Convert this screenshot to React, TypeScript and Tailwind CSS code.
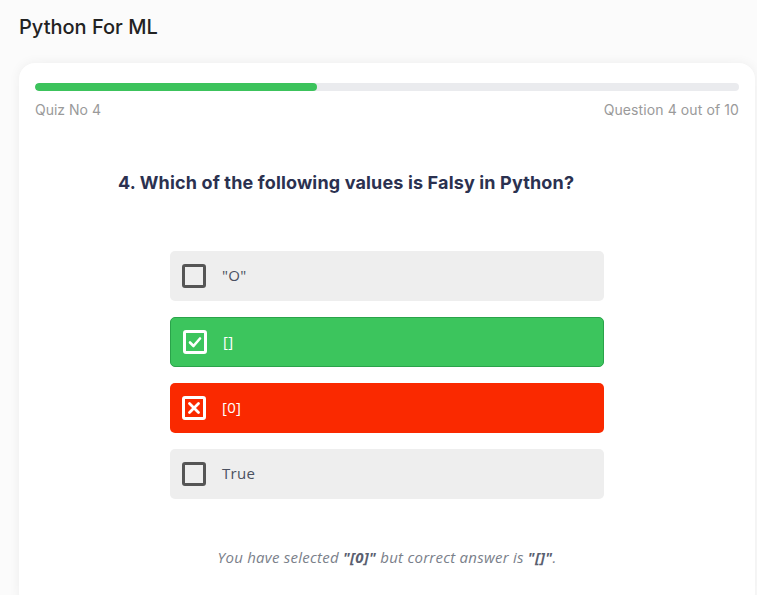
import React from "react";

const Box = ({ kind }: { kind: "empty" | "check" | "x" }) => {
  if (kind === "empty") {
    return <span className="block w-[24px] h-[24px] rounded-[3px] border-[3px] border-[#555555] shrink-0" />;
  }
  return (
    <span className="flex items-center justify-center w-[24px] h-[24px] rounded-[3px] border-[3px] border-white shrink-0">
      {kind === "check" ? (
        <svg width="14" height="14" viewBox="0 0 14 14" fill="none">
          <path d="M2 7.5L5.5 11L12 3.5" stroke="white" strokeWidth="2.6" strokeLinecap="round" strokeLinejoin="round" />
        </svg>
      ) : (
        <svg width="14" height="14" viewBox="0 0 14 14" fill="none">
          <path d="M2.5 2.5L11.5 11.5M11.5 2.5L2.5 11.5" stroke="white" strokeWidth="2.8" strokeLinecap="round" />
        </svg>
      )}
    </span>
  );
};

const Option = ({ label, kind }: { label: string; kind: "plain" | "right" | "wrong" }) => {
  const cls =
    kind === "right"
      ? "bg-[#3cc55d] border border-[#2aa34a] text-white"
      : kind === "wrong"
      ? "bg-[#fa2900] text-white"
      : "bg-[#eeeeee] text-[#4a5160]";
  return (
    <div className={`flex items-center h-[50px] rounded-[5px] pl-[12px] gap-[16px] ${cls}`}>
      <Box kind={kind === "right" ? "check" : kind === "wrong" ? "x" : "empty"} />
      <span className="text-[15px] tracking-[0.3px] -mt-[2px]" style={{ fontFamily: "'Open Sans', sans-serif" }}>{label}</span>
    </div>
  );
};

export default function App() {
  return (
    <div className="min-h-[595px] bg-[#fbfbfb] pl-[19px] pr-[2px] pt-[14px]" style={{ fontFamily: "Inter, 'Open Sans', sans-serif" }}>
      <h1 className="text-[20px] font-medium text-[#222222] leading-[26px]">Python For ML</h1>
      <div className="mt-[23px] bg-white rounded-[16px] shadow-[0_0_12px_rgba(0,0,0,0.06)] px-[16px] pt-[20px] pb-[40px]">
        <div className="h-[8px] rounded-full bg-[#eaebee] overflow-hidden">
          <div className="h-full w-[40%] rounded-full bg-[#3cc35c]" />
        </div>
        <div className="flex justify-between mt-[9px] text-[14px] text-[#9a9a9a] leading-[20px]">
          <span>Quiz No 4</span>
          <span className="tracking-[0.1px]">Question 4 out of 10</span>
        </div>
        <div className="w-[538px] mx-auto mt-[51px]">
          <h2 className="text-[18px] font-bold text-[#2b3150] leading-[24px] tracking-[0.15px]">4. Which of the following values is Falsy in Python?</h2>
        </div>
        <div className="w-[434px] mx-auto mt-[56px] flex flex-col gap-[16px]">
          <Option label={'"O"'} kind="plain" />
          <Option label="[]" kind="right" />
          <Option label="[0]" kind="wrong" />
          <Option label="True" kind="plain" />
        </div>
        <p className="mt-[47px] text-center italic text-[15px] tracking-[0.25px] text-[#7a808a]" style={{ fontFamily: "'Open Sans', sans-serif" }}>
          You have selected <b className="text-[#5a6070]">"[0]"</b> but correct answer is <b className="text-[#5a6070]">"[]"</b>.
        </p>
      </div>
    </div>
  );
}
